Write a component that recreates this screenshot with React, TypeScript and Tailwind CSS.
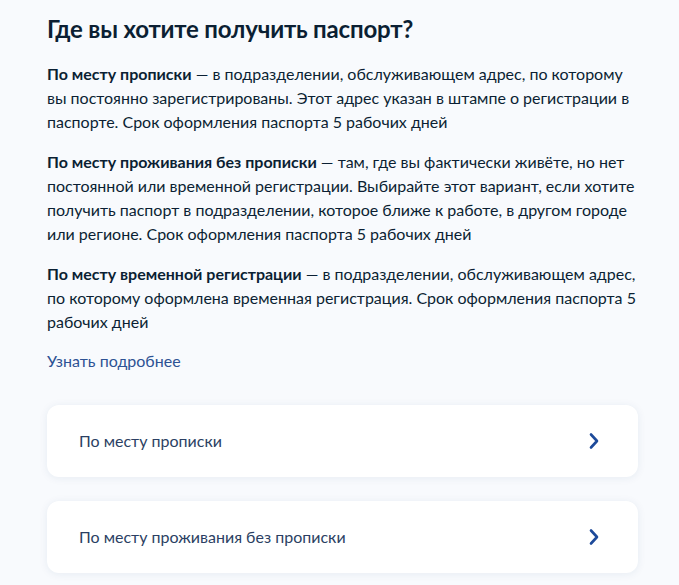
const options = ['По месту прописки', 'По месту проживания без прописки']

function Chevron() {
  return (
    <svg width="12" height="18" viewBox="0 0 12 18" fill="none" className="shrink-0">
      <path d="M3 2.5L9 9L3 15.5" stroke="#1d4a9a" strokeWidth="2.6" strokeLinecap="round" strokeLinejoin="round" />
    </svg>
  )
}

export default function App() {
  return (
    <div className="min-h-[585px] bg-[#f8fafd] pl-[47px] pr-[41px] pt-[13px] pb-4 text-[#0b1f33]" style={{ fontFamily: 'Lato, "Noto Sans", sans-serif' }}>
      <h1 className="text-[24px] font-bold leading-[32px] tracking-[-0.2px] mb-[17px]">Где вы хотите получить паспорт?</h1>

      <div className="flex flex-col gap-[16px] text-[16px] leading-[24px]">
        <p>
          <b className="font-bold">По месту прописки</b> — в подразделении, обслуживающем адрес, по которому вы постоянно зарегистрированы. Этот адрес указан в штампе о регистрации в паспорте. Срок оформления паспорта 5 рабочих дней
        </p>
        <p>
          <b className="font-bold">По месту проживания без прописки</b> — там, где вы фактически живёте, но нет постоянной или временной регистрации. Выбирайте этот вариант, если хотите получить паспорт в подразделении, которое ближе к работе, в другом городе или регионе. Срок оформления паспорта 5 рабочих дней
        </p>
        <p>
          <b className="font-bold">По месту временной регистрации</b> — в подразделении, обслуживающем адрес, по которому оформлена временная регистрация. Срок оформления паспорта 5 рабочих дней
        </p>
      </div>

      <a className="mt-[15px] block text-[16px] leading-[24px] text-[#2d5294]">Узнать подробнее</a>

      <div className="mt-[32px] flex flex-col gap-[24px]">
        {options.map(o => (
          <div key={o} className="flex h-[72px] items-center justify-between rounded-[12px] bg-white pl-[32px] pr-[38px] shadow-[0_1px_8px_rgba(30,60,120,0.08)]">
            <span className="text-[16px] text-[#2b3f63]">{o}</span>
            <Chevron />
          </div>
        ))}
      </div>
    </div>
  )
}
